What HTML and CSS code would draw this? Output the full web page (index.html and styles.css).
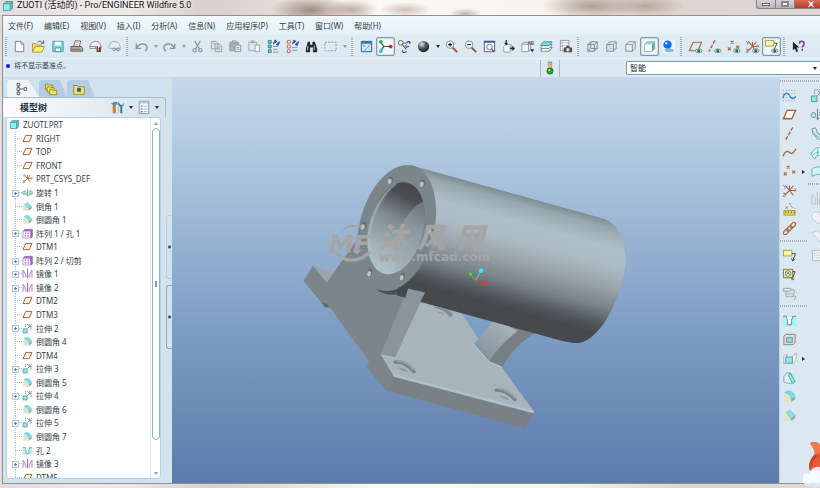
FILE: index.html
```
<!DOCTYPE html>
<html lang="zh-CN">
<head>
<meta charset="utf-8">
<title>ZUOTI (活动的) - Pro/ENGINEER Wildfire 5.0</title>
<link rel="stylesheet" href="styles.css">
</head>
<body>
<svg class="defs" aria-hidden="true">
  <defs>
    <radialGradient id="ball" cx=".35" cy=".3" r=".75"><stop offset="0" stop-color="#e8ecef"/><stop offset=".45" stop-color="#59636b"/><stop offset="1" stop-color="#15191c"/></radialGradient>
  </defs>
  <symbol id="part" viewBox="0 0 16 16"><path d="M2 5l3-3h9v9l-3 3H2z" fill="#5cc4c9"/><path d="M2 5h9v9H2z" fill="#84f4f4"/><path d="M2 5l3-3h9v9l-3 3H2zM2 5h9v9M11 5l3-3" fill="none" stroke="#5b868b"/></symbol>
  <symbol id="new" viewBox="0 0 16 16"><path d="M3.500 2.500h6l3 3v8h-9z" fill="#fff" stroke="#808080"/><path d="M9.500 2.500v3h3" fill="none" stroke="#808080"/></symbol>
  <symbol id="open" viewBox="0 0 16 16"><path d="M1.500 14V5h4l1 1.500h5V9" fill="#f6e278" stroke="#a8954c"/><path d="M1.500 14l3-6h10l-3 6z" fill="#fbee72" stroke="#a8954c"/><path d="M7 3.500c2-2 4-1.500 5 .5M13.500 1.500v3h-3" fill="none" stroke="#444"/></symbol>
  <symbol id="save" viewBox="0 0 16 16"><path d="M3 2.500h11v11H3z" fill="#5fe0e3" stroke="#5f939c"/><path d="M5 3h7v4H5z" fill="#fff"/><path d="M5.500 9.500h6v4h-6z" fill="#e6f7f8" stroke="#5f939c"/></symbol>
  <symbol id="print" viewBox="0 0 16 16"><path d="M5 8l1.500-6h6L11 8z" fill="#fff" stroke="#666"/><path d="M2 8h11l1.500 2v3H2z" fill="#b5b0aa" stroke="#5d5757"/><path d="M3 11h9" stroke="#7c5a52"/><path d="M7 4h3M6.500 6h3" stroke="#999"/><path d="M10 11h2" stroke="#2dc33d"/></symbol>
  <symbol id="mail" viewBox="0 0 16 16"><path d="M2 9c0-8 11-9 12-1v2H2z" fill="#f7f4ef" stroke="#888"/><path d="M2 8h6v2" fill="none" stroke="#888"/><path d="M10 7.500v5.500h2.500V9" fill="none" stroke="#7b362a" stroke-width="1.500"/><path d="M13 8v6" stroke="#333"/></symbol>
  <symbol id="maillink" viewBox="0 0 16 16"><path d="M2 9c0-8 11-9 12-1v2H2z" fill="#e6ebee" stroke="#a5adb2"/><path d="M6 11c0-2 3-2 3 0s-3 2-3 0M10 11c0-2 4-2 4 0s-4 2-4 0M8 11h4" fill="none" stroke="#8a9399"/></symbol>
  <symbol id="undo" viewBox="0 0 16 16"><path d="M2.500 5v5h5M3 10c2-6 10-6 11-1 0 2-1 3-2 4" fill="none" stroke="#8b969c" stroke-width="1.500"/></symbol>
  <symbol id="redo" viewBox="0 0 16 16"><path d="M13.500 5v5h-5M13 10C11 4 3 4 2 9c0 2 1 3 2 4" fill="none" stroke="#8b969c" stroke-width="1.500"/></symbol>
  <symbol id="cut" viewBox="0 0 16 16"><path d="M5 2l5 8.500M11 2L6 10.500" stroke="#8f9aa1" stroke-width="1.300"/><g fill="none" stroke="#8f9aa1" stroke-width="1.300"><circle cx="5" cy="12" r="1.800"/><circle cx="11" cy="12" r="1.800"/></g></symbol>
  <symbol id="copy" viewBox="0 0 16 16"><path d="M2.500 2.500h5l2 2v6h-7zM6.500 5.500h5l2 2v6h-7z" fill="#dfe5e8" stroke="#98a2a8"/><path d="M4 5h3M8 8.500h4M8 10.500h4" stroke="#98a2a8"/></symbol>
  <symbol id="paste" viewBox="0 0 16 16"><path d="M2 3.500h9v9H2z" fill="#a9b2b7" stroke="#8a959b"/><path d="M4.500 2h4v2h-4z" fill="#dce2e5" stroke="#8a959b"/><path d="M7.500 6.500h6v7h-6z" fill="#e8edef" stroke="#8a959b"/><path d="M9 9h3M9 11h3" stroke="#8a959b"/></symbol>
  <symbol id="pastes" viewBox="0 0 16 16"><path d="M2 3.500h8v9H2z" fill="#e3e8ea" stroke="#9aa4aa"/><path d="M4.500 2h3v2h-3z" fill="#b7c0c5" stroke="#9aa4aa"/><path d="M8.500 6.500h5v7h-5z" fill="#f2f5f6" stroke="#9aa4aa"/></symbol>
  <symbol id="regen" viewBox="0 0 16 16"><path d="M2.500 1.500h3v3h-3zM2.500 6.500h3v3h-3zM2.500 11.500h3v3h-3z" fill="#4be0e2" stroke="#47777e"/><path d="M7.500 8h5M7.500 11h5M7.500 14h6" stroke="#8b989e"/><path d="M8 5.500c0-2 1-3 3-3M14 2.500c1 2 0 3-2 3M9.500 1l2 1.500-2 1.500zM13 4l-2 1.500L13 7z" fill="#274cad" stroke="#274cad"/></symbol>
  <symbol id="regenmgr" viewBox="0 0 16 16"><path d="M2.500 1.500h3v3h-3zM2.500 6.500h3v3h-3zM2.500 11.500h3v3h-3z" fill="#fff" stroke="#cb5f54"/><path d="M7.500 9h6M7.500 12h6" stroke="#8b989e"/><path d="M8 5.500c0-2 1-3 3-3M14 2.500c1 2 0 3-2 3M9.500 1l2 1.500-2 1.500zM13 4l-2 1.500L13 7z" fill="#274cad" stroke="#274cad"/></symbol>
  <symbol id="find" viewBox="0 0 16 16"><path d="M4 3h2.500v3H9V3h2.500l2.500 7v4H9.500V9h-3v5H2v-4z" fill="#25282a"/><path d="M4 7v5M11 7v5" stroke="#bdc6ca"/></symbol>
  <symbol id="select" viewBox="0 0 16 16"><path d="M2 3.500h12v9H2z" fill="none" stroke="#87939a" stroke-dasharray="2 1.500"/></symbol>
  <symbol id="repaint" viewBox="0 0 16 16"><path d="M2.500 2.500h11v11h-11z" fill="#c7e6fa" stroke="#2d579b"/><path d="M3 3h10v2H3z" fill="#3f6fb7"/><path d="M12 5.500L5 13V9z" fill="#fff"/><path d="M4 6.500l3 2M12 5.500L8 10l-3 3" fill="none" stroke="#5384bf"/></symbol>
  <symbol id="spin" viewBox="0 0 16 16"><path d="M3 3l3 5-3 5M6 8h8" fill="none" stroke="#414e53" stroke-width="1.300"/><circle cx="3" cy="3" r="2" fill="#28bc32"/><circle cx="3" cy="13" r="2" fill="#29c9cc"/><circle cx="13.500" cy="8" r="2" fill="#e11d24"/></symbol>
  <symbol id="orient" viewBox="0 0 16 16"><circle cx="4" cy="4" r="2.500" fill="#f4f8fa" stroke="#666"/><circle cx="8" cy="6" r="2" fill="none" stroke="#666"/><path d="M6 7l4 4" stroke="#96532d"/><path d="M10 4c3-2 4-1 4 1M13 8c-3 0-4 1-4 3M6 12c-1 3 3 3 4 1" fill="none" stroke="#3b4ca0" stroke-width="1.300"/><path d="M11 2h3v3z" fill="#3b4ca0"/></symbol>
  <symbol id="sphere" viewBox="0 0 16 16"><circle cx="8" cy="8" r="6" fill="url(#ball)"/></symbol>
  <symbol id="zin" viewBox="0 0 16 16"><path d="M9 9l5 5" stroke="#96532d" stroke-width="2"/><circle cx="6.500" cy="6" r="4" fill="#f5f9fb" stroke="#888"/><path d="M4.500 6h4M6.500 4v4" stroke="#111" stroke-width="1.200"/></symbol>
  <symbol id="zout" viewBox="0 0 16 16"><path d="M9 9l5 5" stroke="#96532d" stroke-width="2"/><circle cx="6.500" cy="6" r="4" fill="#f5f9fb" stroke="#888"/><path d="M4.500 6h4" stroke="#111" stroke-width="1.200"/></symbol>
  <symbol id="refit" viewBox="0 0 16 16"><path d="M2.500 2.500h11v11h-11z" fill="#fff" stroke="#3c5b94"/><path d="M2 3h12" stroke="#3c5b94" stroke-width="2"/><circle cx="8" cy="8.500" r="3" fill="#f5f9fb" stroke="#777"/><path d="M10 10.500l3 3" stroke="#96532d" stroke-width="1.600"/></symbol>
  <symbol id="datumo" viewBox="0 0 16 16"><path d="M3 8l2-2h6v6l-2 2H3z" fill="#fff" stroke="#8b989c"/><path d="M9 8l2-2v6l-2 2z" fill="#72d4d8"/><path d="M5.500 1v4M4 4l1.500 2L7 4M10 10h4M12 8l2 2-2 2" fill="none" stroke="#222" stroke-width="1.200"/></symbol>
  <symbol id="views" viewBox="0 0 16 16"><path d="M2 5.500l2-2h7v8l-2 2H2zM2 5.500h7v8M9 5.500l2-2" fill="#eff7f9" stroke="#8b989c"/><path d="M11 11h4l-2 3z" fill="#222"/></symbol>
  <symbol id="layers" viewBox="0 0 16 16"><path d="M2 12l3-3h9l-3 4H2z" fill="#fff" stroke="#5f8387"/><path d="M2 9l3-3h9l-3 4H2z" fill="#fff" stroke="#5f8387"/><path d="M2 6l3-3h9l-3 4H2z" fill="#6be4e8" stroke="#5f8387"/></symbol>
  <symbol id="camera" viewBox="0 0 16 16"><path d="M2.500 1.500h9v11h-9z" fill="#fff" stroke="#8e9799"/><path d="M4.500 2v10M3 4h8M3 7h8" stroke="#b1b8ba"/><path d="M6 9h2l1-1.500h3L13 9h2v5H6z" fill="#57534a"/><circle cx="10.500" cy="11.500" r="1.800" fill="#e0dccf"/></symbol>
  <symbol id="wire" viewBox="0 0 16 16"><path d="M3 6l3-3h7v7l-3 3H3zM3 6h7v7M10 6l3-3M6 3v7h7M6 10l-3 3" fill="none" stroke="#7b858a"/></symbol>
  <symbol id="hidden" viewBox="0 0 16 16"><path d="M6 3v7h7M6 10l-3 3" fill="none" stroke="#b9c4ca"/><path d="M3 6l3-3h7v7l-3 3H3zM3 6h7v7M10 6l3-3" fill="none" stroke="#858f94"/></symbol>
  <symbol id="nohidden" viewBox="0 0 16 16"><path d="M3 6l3-3h7v7l-3 3H3zM3 6h7v7M10 6l3-3" fill="#e7f0f4" stroke="#7f898e"/></symbol>
  <symbol id="shaded" viewBox="0 0 16 16"><path d="M2.500 6l3-3h8l-3 3z" fill="#78e8ea"/><path d="M2.500 6h8v7.500h-8z" fill="#fff"/><path d="M10.500 6l3-3v7.500l-3 3z" fill="#6ba6aa"/><path d="M2.500 6l3-3h8v7.500l-3 3h-8z" fill="none" stroke="#8fa5a8"/></symbol>
  <symbol id="realism" viewBox="0 0 16 16"><path d="M1 1h14v14H1z" fill="#edf5fb"/><ellipse cx="9" cy="12" rx="5" ry="2" fill="#88b6db"/><circle cx="7" cy="6" r="4.500" fill="#116bed"/><circle cx="5.500" cy="4.500" r="1.300" fill="#b7e2ff"/></symbol>
  <symbol id="eye" viewBox="0 0 16 16"><ellipse cx="11.500" cy="12.500" rx="3.500" ry="2" fill="#dcebea" stroke="#7b8983"/><circle cx="11.500" cy="12.500" r="1.600" fill="#12706c"/></symbol>
  <symbol id="plane" viewBox="0 0 16 16"><path d="M1.500 12.500l4-9h9l-4 9z" fill="#fdf7ef" stroke="#a0603c" stroke-width="1.400"/></symbol>
  <symbol id="planeeye" viewBox="0 0 16 16"><path d="M1.500 12.500l4-9h9l-4 9z" fill="none" stroke="#a9663d" stroke-width="1.200"/><use href="#eye"/></symbol>
  <symbol id="axis" viewBox="0 0 16 16"><path d="M11.500 1.500L4 14.500" stroke="#a9663d" stroke-width="1.500" stroke-dasharray="4 1.500"/></symbol>
  <symbol id="axiseye" viewBox="0 0 16 16"><path d="M8.500 1.500L2 13.500" stroke="#a9663d" stroke-width="1.500" stroke-dasharray="4 1.500"/><use href="#eye"/></symbol>
  <symbol id="points" viewBox="0 0 16 16"><path d="M5 2l3 3M8 2L5 5M11 7l3 3M14 7l-3 3M2 9l3 3M5 9l-3 3" stroke="#a9663d" stroke-width="1.300"/></symbol>
  <symbol id="pointseye" viewBox="0 0 16 16"><use href="#points"/><use href="#eye"/></symbol>
  <symbol id="csys" viewBox="0 0 16 16"><path d="M8 8h5M8 8L4 3M8 8l-5 5M8 8l4-5M8 8l4 5M8 8V3" stroke="#a9663d" stroke-width="1.200"/><path d="M1 2l2 2 1-2M3 4v2M1 11h3l-3 3h3M13 6l2 3M15 6l-2 3" fill="none" stroke="#7f8689"/></symbol>
  <symbol id="csyseye" viewBox="0 0 16 16"><use href="#csys"/><use href="#eye"/></symbol>
  <symbol id="note" viewBox="0 0 16 16"><path d="M1.500 2.500h9v6h-9z" fill="#f9f7a8" stroke="#9b9750"/><path d="M10.500 6h4l-3 7M10 11l1.500 3 2-2" fill="none" stroke="#444"/></symbol>
  <symbol id="noteeye" viewBox="0 0 16 16"><path d="M1.500 1.500h9v6h-9z" fill="#f9f7a8" stroke="#9b9750"/><path d="M11 4.500h3l-3 6" fill="none" stroke="#444"/><use href="#eye"/></symbol>
  <symbol id="help" viewBox="0 0 16 16"><path d="M2 3v9l2-2 2 4 1.500-1L6 9h3z" fill="#222"/><path d="M9 5c0-4 5-3 5 0 0 2-2 2-2 4M12 10.500v2" fill="none" stroke="#8f2d91" stroke-width="1.700"/></symbol>
  <symbol id="sketch" viewBox="0 0 16 16"><path d="M1 2.500h14M1 6h14M1 10h14M1 13.500h14" stroke="#8c9ca6" stroke-dasharray="1 2"/><path d="M1 11c1-6 5-7 7-3s4 4 7 1" fill="none" stroke="#3c83db" stroke-width="1.600"/></symbol>
  <symbol id="curve" viewBox="0 0 16 16"><path d="M1 12c2-6 5-6 7-4s4 1 7-4" fill="none" stroke="#a9663d" stroke-width="1.400"/></symbol>
  <symbol id="ruler" viewBox="0 0 16 16"><path d="M2 9h12v5H2z" fill="#ead950" stroke="#a59a43"/><path d="M4 10v2M7 10v2M10 10v2M13 10v2" stroke="#706927"/><path d="M4 5l2 2M6 5L4 7M8 1l1 2M10 4l1 2M13 6l1 1" stroke="#a9663d"/></symbol>
  <symbol id="chain" viewBox="0 0 16 16"><g fill="none" stroke="#a9663d" stroke-width="1.300"><ellipse cx="4.500" cy="11.500" rx="3.500" ry="2" transform="rotate(-45 4.500 11.500)"/><ellipse cx="8" cy="8" rx="3.500" ry="2" transform="rotate(-45 8 8)"/><ellipse cx="11.500" cy="4.500" rx="3.500" ry="2" transform="rotate(-45 11.500 4.500)"/></g></symbol>
  <symbol id="annot" viewBox="0 0 16 16"><path d="M1.500 2.500h10v9h-10z" fill="#f8f27c" stroke="#7b763c"/><circle cx="6.500" cy="7" r="3" fill="#fff" stroke="#666"/><path d="M5 8l1.500-2.500L8 8M11 5h3l-3 7M10 11l1 3 2-2" fill="none" stroke="#444"/></symbol>
  <symbol id="prop" viewBox="0 0 16 16"><path d="M1.500 2.500h8v3h-8zM4.500 8.500h8v3h-8z" fill="#e1e8eb" stroke="#9ba5ab"/><path d="M4 6v3M10 4h3v4M13 11h2l-2 4" fill="none" stroke="#9ba5ab"/></symbol>
  <symbol id="hole" viewBox="0 0 16 16"><path d="M1 4h14v10H1z" fill="#9deff2"/><path d="M5 4h6v2l-1 1v5H6V7L5 6z" fill="#fff"/><path d="M1 3.500h4V6l1 1v5.500h4V7l1-1V3.500h4" fill="none" stroke="#6d8794"/><path d="M1 12l4-4M1 8l3-3M11 14l4-4M12 9l3-3" stroke="#e8feff"/></symbol>
  <symbol id="shell" viewBox="0 0 16 16"><path d="M2 4.500l2-2h10v9l-2 2H2z" fill="#dddcd6" stroke="#7d8486"/><path d="M5 6h6v5H5z" fill="#7be8eb" stroke="#7d8486"/></symbol>
  <symbol id="rib" viewBox="0 0 16 16"><path d="M2 6l3-3v8l-3 3z" fill="#fff" stroke="#a0a7aa"/><path d="M11 6l4-4v8l-4 4z" fill="#fff" stroke="#a0a7aa"/><path d="M4 6.500h7V13H4z" fill="#86ecee" stroke="#6f9599"/></symbol>
  <symbol id="draft" viewBox="0 0 16 16"><path d="M2 13V7l3-4h4l5 9-3 3z" fill="#e6ecec" stroke="#6fb5b8"/><path d="M8 3l6 9-3 2-4-8z" fill="#8ceeee" stroke="#3db0b5"/></symbol>
  <symbol id="round" viewBox="0 0 16 16"><path d="M2 5l4 1c3 1 4 3 4 8H2z" fill="#e2e0d0"/><path d="M3 4c2-3 9-3 11 4l-4 3C10 7 7 5 3 4z" fill="#6ae6e9" stroke="#8aacad" stroke-width=".700"/><path d="M14 8v3l-4 3v-3z" fill="#9da6a3"/></symbol>
  <symbol id="chamfer" viewBox="0 0 16 16"><path d="M2 5l3-2 5 7v4H2z" fill="#e2e0d0"/><path d="M5 5l3-3 6 6-4 4z" fill="#72eaec" stroke="#8aacad" stroke-width=".700"/><path d="M14 8v3l-4 3v-3z" fill="#9da6a3"/></symbol>
  <symbol id="extrude" viewBox="0 0 16 16"><path d="M1.500 8.500h6v6h-6z" fill="#86ecee" stroke="#5c8d91"/><path d="M5 6V2h9v7h-4" fill="none" stroke="#78858a" stroke-dasharray="2 1"/><path d="M8 8l4-4M12 4H9M12 4v3" fill="none" stroke="#555f63"/></symbol>
  <symbol id="revolve" viewBox="0 0 16 16"><path d="M1 9c1-4 4-4 5-1s-4 5-5 1M10 6c3-2 5 0 5 3s-4 2-5-1" fill="#aee8ea" stroke="#6d7c81"/><path d="M8 2v12M6 11c3 2 5 1 6-1" fill="none" stroke="#6d7c81"/></symbol>
  <symbol id="pattern" viewBox="0 0 16 16"><path d="M2 4l2-2h11v11l-2 2" fill="#9268b9" stroke="#8258a6"/><path d="M1.500 4.500h11v10h-11z" fill="#fff" stroke="#a569d4"/><path d="M4 7.500h2M8 7.500h2M4 11.500h2M8 11.500h2" stroke="#8d53b8" stroke-width="2"/></symbol>
  <symbol id="mirror" viewBox="0 0 16 16"><path d="M1.500 14V3l4 7v4M14.500 14V3l-4 7v4" fill="#f5edff" stroke="#b172e4" stroke-width="1.300"/><path d="M8 1v14" stroke="#75667f" stroke-width="1.200"/></symbol>
  <symbol id="sweep" viewBox="0 0 16 16"><path d="M2 3l4-1 2 6 6 3v3H8L3 8z" fill="#dfe9e9" stroke="#7d8d90"/><path d="M2 3l4 6 6 4-7-2z" fill="#54d4d8"/></symbol>
  <symbol id="surf" viewBox="0 0 16 16"><path d="M1 10c4-8 8-8 14-6v9c-5-3-8-3-10 2z" fill="#d3f7f6" stroke="#6fa0a3"/><path d="M3 11c4-4 7-4 12-2M8 5v7M12 4v7" fill="none" stroke="#50bcbf"/></symbol>
  <symbol id="style" viewBox="0 0 16 16"><path d="M2 13V6c1-3 7-3 12-3v8c-5 0-9 0-12 2z" fill="#c9f5f6" stroke="#76a6aa"/></symbol>
  <symbol id="gmirror" viewBox="0 0 16 16"><path d="M2 14V4l4 4v6zM14 14V4l-4 4v6zM8 1v14" fill="#dce3e6" stroke="#b9c4ca"/></symbol>
  <symbol id="merge" viewBox="0 0 16 16"><path d="M2 5l3-3h4l2 2v2h3v5l-3 3H7l-2-3-3-2z" fill="#eef2f4" stroke="#bfc9ce"/></symbol>
  <symbol id="trim" viewBox="0 0 16 16"><path d="M2 4l5-2 7 3v5l-4 4-2-4z" fill="#eef2f4" stroke="#bfc9ce"/></symbol>
  <symbol id="gpattern" viewBox="0 0 16 16"><path d="M2.500 2.500h12v11h-12z" fill="#edf1f3" stroke="#b0bac0"/><path d="M4 5.500h10M4 8h10M4 10.500h10" stroke="#b0bac0" stroke-dasharray="1 2"/></symbol>
  <symbol id="treeic" viewBox="0 0 16 16"><path d="M3.500 1.500h3v3h-3zM3.500 6.500h3v3h-3zM3.500 11.500h3v3h-3zM11.500 6.500h3v3h-3z" fill="#fff" stroke="#4b5154"/><path d="M5 4.500v2M5 9.500v2M7 8h4" stroke="#4b5154"/></symbol>
  <symbol id="folders" viewBox="0 0 16 16"><g fill="#f8e660" stroke="#8f803a"><path d="M1.500 2.500h3l1 1h4v5h-8z"/><path d="M3.500 5.500h3l1 1h4v5h-8z"/><path d="M6.500 8.500h3l1 1h4v5h-8z"/></g></symbol>
  <symbol id="fav" viewBox="0 0 16 16"><path d="M2 4h4l1 1.500h7V14H2z" fill="#f9ea5c" stroke="#8f803a"/><path d="M8 6.500v5M5.500 9h5M6 7l4 4M10 7l-4 4" stroke="#2747be" stroke-width="1.200"/></symbol>
  <symbol id="tools" viewBox="0 0 16 16"><path d="M1 4l3-2h4v3H6v9H3V5z" fill="#78868d"/><path d="M3 7h3v7H3z" fill="#d98046"/><path d="M9 2c-1 3 0 4 2 5v7h2V7c2-1 2-3 1-5v3h-3z" fill="#3875a8"/><path d="M9 7v7" stroke="#e3b331"/></symbol>
  <symbol id="list" viewBox="0 0 16 16"><path d="M3.500 1.500h10v13h-10z" fill="#fff" stroke="#8a979e"/><path d="M4 2h9v2H4z" fill="#c4d0d6"/><path d="M5 6.500h2M5 9.500h2M5 12.500h2" stroke="#4f7995" stroke-width="1.500"/><path d="M8 6.500h4M8 9.500h4M8 12.500h4" stroke="#9ba7ad"/></symbol>
  <symbol id="light" viewBox="0 0 16 16"><path d="M6 1h4v10H6z" fill="#e1a198" stroke="#9b8277" stroke-width=".700"/><path d="M6.500 5h3v3h-3z" fill="#e4d248"/><circle cx="8" cy="11.500" r="3.500" fill="#1fac2c" stroke="#19671f"/><circle cx="7" cy="10.500" r="1" fill="#c3ffc1"/></symbol>
</svg>

<header class="title">
  <svg class="title-icon"><use href="#part"/></svg>
  <h1>ZUOTI (活动的) - Pro/ENGINEER Wildfire 5.0</h1>
  <div class="controls">
    <button aria-label="最小化"><i class="g-min"></i></button><button aria-label="最大化"><i class="g-max"></i></button><button class="close" aria-label="关闭"><svg viewBox="0 0 10 8"><path d="M1 0h2l2 2 2-2h2L6.500 3.500 9 7H7L5 5 3 7H1l2.500-3.500z" fill="#fff" stroke="#8d4a40" stroke-width=".500"/></svg></button>
  </div>
</header>

<div class="window">
  <nav class="menu">
    <a href="#">文件(F)</a><a href="#">编辑(E)</a><a href="#">视图(V)</a><a href="#">插入(I)</a><a href="#">分析(A)</a><a href="#">信息(N)</a><a href="#">应用程序(P)</a><a href="#">工具(T)</a><a href="#">窗口(W)</a><a href="#">帮助(H)</a>
  </nav>

  <div class="bar" role="toolbar" aria-label="主工具栏">
    <i class="grip first"></i>
    <button aria-label="新建"><svg><use href="#new"/></svg></button>
    <button aria-label="打开"><svg><use href="#open"/></svg></button>
    <button aria-label="保存"><svg><use href="#save"/></svg></button>
    <button aria-label="打印"><svg><use href="#print"/></svg></button>
    <button aria-label="发送邮件"><svg><use href="#mail"/></svg></button>
    <button aria-label="发送链接"><svg><use href="#maillink"/></svg></button>
    <i class="grip"></i>
    <button aria-label="撤消"><svg><use href="#undo"/></svg></button>
    <button class="drop dim" aria-label="撤消列表"></button>
    <button aria-label="重做"><svg><use href="#redo"/></svg></button>
    <button class="drop dim" aria-label="重做列表"></button>
    <button aria-label="剪切"><svg><use href="#cut"/></svg></button>
    <button aria-label="复制"><svg><use href="#copy"/></svg></button>
    <button aria-label="粘贴"><svg><use href="#paste"/></svg></button>
    <button aria-label="选择性粘贴"><svg><use href="#pastes"/></svg></button>
    <button aria-label="再生"><svg><use href="#regen"/></svg></button>
    <button aria-label="再生管理器"><svg><use href="#regenmgr"/></svg></button>
    <button aria-label="查找"><svg><use href="#find"/></svg></button>
    <button aria-label="框选"><svg><use href="#select"/></svg></button>
    <button class="drop dim" aria-label="选择方式"></button>
    <i class="grip"></i>
    <button aria-label="重画"><svg><use href="#repaint"/></svg></button>
    <button class="on" aria-label="旋转中心"><svg><use href="#spin"/></svg></button>
    <button aria-label="定向模式"><svg><use href="#orient"/></svg></button>
    <button aria-label="外观库"><svg><use href="#sphere"/></svg></button>
    <button class="drop" aria-label="外观列表"></button>
    <button aria-label="放大"><svg><use href="#zin"/></svg></button>
    <button aria-label="缩小"><svg><use href="#zout"/></svg></button>
    <button aria-label="重新调整"><svg><use href="#refit"/></svg></button>
    <button aria-label="重定向"><svg><use href="#datumo"/></svg></button>
    <button aria-label="已保存视图"><svg viewBox="0 0 16 16"><use href="#views"/><text x="8" y="6" class="glyph">AB</text></svg></button>
    <button aria-label="层"><svg><use href="#layers"/></svg></button>
    <button aria-label="视图管理器"><svg><use href="#camera"/></svg></button>
    <i class="grip"></i>
    <button aria-label="线框"><svg><use href="#wire"/></svg></button>
    <button aria-label="隐藏线"><svg><use href="#hidden"/></svg></button>
    <button aria-label="无隐藏线"><svg><use href="#nohidden"/></svg></button>
    <button class="on" aria-label="着色"><svg><use href="#shaded"/></svg></button>
    <button aria-label="增强的真实感"><svg><use href="#realism"/></svg></button>
    <i class="grip"></i>
    <button aria-label="平面显示"><svg><use href="#planeeye"/></svg></button>
    <button aria-label="轴显示"><svg><use href="#axiseye"/></svg></button>
    <button aria-label="点显示"><svg><use href="#pointseye"/></svg></button>
    <button aria-label="坐标系显示"><svg><use href="#csyseye"/></svg></button>
    <button class="on" aria-label="注释显示"><svg><use href="#noteeye"/></svg></button>
    <i class="grip"></i>
    <button aria-label="帮助"><svg><use href="#help"/></svg></button>
  </div>

  <div class="message">
    <p>将不显示基准点。</p>
    <div class="status"><svg><use href="#light"/></svg></div>
    <div class="filter"><select aria-label="选择过滤器"><option>智能</option></select></div>
  </div>

  <main>
    <aside class="panel">
      <div class="tabs">
        <button class="tab active" aria-label="模型树"><svg><use href="#treeic"/></svg></button>
        <button class="tab" aria-label="文件夹浏览器"><svg><use href="#folders"/></svg></button>
        <button class="tab" aria-label="收藏夹"><svg><use href="#fav"/></svg></button>
      </div>
      <div class="panel-head">
        <h2>模型树</h2>
        <button aria-label="设置"><svg><use href="#tools"/></svg></button><button class="drop" aria-label="设置列表"></button>
        <button aria-label="显示"><svg><use href="#list"/></svg></button><button class="drop" aria-label="显示列表"></button>
      </div>
      <div class="tree-box">
        <div class="tree-view">
        <ul class="tree">
          <li class="root"><svg><use href="#part"/></svg>ZUOTI.PRT</li>
          <li><svg><use href="#plane"/></svg>RIGHT</li>
          <li><svg><use href="#plane"/></svg>TOP</li>
          <li><svg><use href="#plane"/></svg>FRONT</li>
          <li><svg><use href="#csys"/></svg>PRT_CSYS_DEF</li>
          <li><button aria-label="展开"></button><svg><use href="#revolve"/></svg>旋转 1</li>
          <li><svg><use href="#chamfer"/></svg>倒角 1</li>
          <li><svg><use href="#round"/></svg>倒圆角 1</li>
          <li><button aria-label="展开"></button><svg><use href="#pattern"/></svg>阵列 1 / 孔 1</li>
          <li><svg><use href="#plane"/></svg>DTM1</li>
          <li><button aria-label="展开"></button><svg><use href="#pattern"/></svg>阵列 2 / 切剪</li>
          <li><button aria-label="展开"></button><svg><use href="#mirror"/></svg>镜像 1</li>
          <li><button aria-label="展开"></button><svg><use href="#mirror"/></svg>镜像 2</li>
          <li><svg><use href="#plane"/></svg>DTM2</li>
          <li><svg><use href="#plane"/></svg>DTM3</li>
          <li><button aria-label="展开"></button><svg><use href="#extrude"/></svg>拉伸 2</li>
          <li><svg><use href="#round"/></svg>倒圆角 4</li>
          <li><svg><use href="#plane"/></svg>DTM4</li>
          <li><button aria-label="展开"></button><svg><use href="#extrude"/></svg>拉伸 3</li>
          <li><svg><use href="#round"/></svg>倒圆角 5</li>
          <li><button aria-label="展开"></button><svg><use href="#extrude"/></svg>拉伸 4</li>
          <li><svg><use href="#round"/></svg>倒圆角 6</li>
          <li><button aria-label="展开"></button><svg><use href="#extrude"/></svg>拉伸 5</li>
          <li><svg><use href="#round"/></svg>倒圆角 7</li>
          <li><svg><use href="#hole"/></svg>孔 2</li>
          <li><button aria-label="展开"></button><svg><use href="#mirror"/></svg>镜像 3</li>
          <li><svg><use href="#plane"/></svg>DTM5</li>
        </ul>
        </div>
        <div class="scroll"><i class="up"></i><span></span><i class="down"></i></div>
      </div>
    </aside>
    <div class="sash"><i></i><i></i></div>

    <section class="canvas" aria-label="模型">
      <svg viewBox="172 78 607 406" preserveAspectRatio="xMidYMid slice">
        <defs>
          <linearGradient id="cyl" gradientUnits="userSpaceOnUse" x1="440" y1="174" x2="405.700" y2="298.400">
            <stop offset="0" stop-color="#7f8c93"/><stop offset=".06" stop-color="#98a6ae"/><stop offset=".2" stop-color="#afbec8"/><stop offset=".34" stop-color="#adbbc4"/><stop offset=".5" stop-color="#98a4aa"/><stop offset=".66" stop-color="#7a8489"/><stop offset=".8" stop-color="#50565a"/><stop offset=".87" stop-color="#44494c"/><stop offset="1" stop-color="#45494c"/>
          </linearGradient>
          <linearGradient id="bore" gradientUnits="userSpaceOnUse" x1="411" y1="185" x2="390" y2="274">
            <stop offset="0" stop-color="#45494c"/><stop offset=".15" stop-color="#4a4f52"/><stop offset=".42" stop-color="#808b91"/><stop offset=".75" stop-color="#a2b0b8"/><stop offset="1" stop-color="#b3c2cb"/>
          </linearGradient>
          <linearGradient id="ribg" gradientUnits="userSpaceOnUse" x1="505" y1="326" x2="482" y2="354"><stop offset="0" stop-color="#a5b1b8"/><stop offset="1" stop-color="#89959d"/></linearGradient>
          <clipPath id="boreclip"><ellipse cx="396" cy="228.700" rx="27.300" ry="47" transform="rotate(14.400 396 228.700)"/></clipPath>
          <g id="slot"><path d="M-11-6C-6-9 9-1 11 5 9.500 7.500 7 6 6 4 2 0-5-4-10-3-12-4-12-5-11-6z" fill="#78838a"/><path d="M-8-6C-3-7 6-2 9 3" fill="none" stroke="#95a1a8" stroke-width="2"/><path d="M-7 1C-3 0 2 3 3 5-1 5-4 3-7 1z" fill="#909ba2"/></g>
          <g id="bolt"><ellipse rx="2.500" ry="4" transform="rotate(14)" fill="#626c71"/><ellipse cx="-.400" cy="1" rx="2" ry="2.800" transform="rotate(14)" fill="#b6c5ce"/></g>
        </defs>

        <path d="M494 322L476 343l13 19 13 6c8-15 20-27 34-35z" fill="#777f85"/>
        <path d="M494 320l-18 23 13 19c8-13 18-22 29-31z" fill="url(#ribg)"/>
        <path d="M408 288l53 25 18 27-6 5 15 17 14 6 32 44-1 2-140-37-12-22z" fill="#a7b4bc"/>
        <path d="M393.500 376l140 37-8.500 16-139-38z" fill="#798186"/>
        <path d="M392.500 375.500l141 37" stroke="#b1c1cc" stroke-width="2.500"/>
        <path d="M381 355l12 20.500M395 358l-14-3M473 344.500l16 18 13 5.500" fill="none" stroke="#b3c2cc" stroke-width="1.500"/>
        <path d="M303.500 281.500L313 266l13.700 17L357 240l21 50 30-1-27 66 12.500 21-7.500 15-19-23 2-6-39-54c-3 1-6 0-7-3z" fill="#7b858a"/>
        <path d="M313 266l21 7-7.300 10z" fill="#98a4ab"/>
        <path d="M322 303l4 1 3 3-4 1z" fill="#5e676c"/>
        <path d="M408 288l17 5-30 65-14-3z" fill="#8b949b"/>
        <path d="M376 289c10 4 22 3 32-6l10 8-10-1c-10 8-26 6-32-1z" fill="#4b5053"/>

        <path d="M407 165.500c4-.500 8 1 12 2.500l184 51c16 5 23 23 22.500 43-1 30-23 77-46 81.500-6 .500-12-1-17-2L397 296z" fill="url(#cyl)"/>
        <path d="M408 289l17 4-6 12-14-5z" fill="#8b949b"/>
        <ellipse cx="396.700" cy="228.500" rx="37.300" ry="64.300" transform="rotate(14.400 396.700 228.500)" fill="#7b868b"/>
        <ellipse cx="396" cy="228.700" rx="27.300" ry="47" transform="rotate(14.400 396 228.700)" fill="url(#bore)"/>
        <g clip-path="url(#boreclip)">
          <path d="M425 201c-19 8-37 39-28 76h28z" fill="#9ba9b1" opacity=".45"/>
          <path d="M396 184c-13 9-25 31-27 53 0 18 6 33 20 38" fill="none" stroke="#b2c0c8" stroke-width="2.500" opacity=".5"/>
        </g>
        <use href="#bolt" x="390.300" y="181"/><use href="#bolt" x="422.300" y="184"/><use href="#bolt" x="363.300" y="226.700"/><use href="#bolt" x="369.700" y="273.300"/><use href="#bolt" x="402.300" y="277.300"/><use href="#bolt" x="430" y="231"/>

        <use href="#slot" x="405" y="367.500"/><use href="#slot" x="506" y="395.500"/>
        <path d="M434 307c8 0 17 4 19 8 0 3-3 3-5 1-3-5-8-6-14-8z" fill="#828d94"/><path d="M437 312c3 0 6 1 8 3-3 0-6-1-8-3z" fill="#909ba2"/>

        <g fill="#a5a5a6">
          <text x="329" y="253" class="wm-logo">M</text><text x="353" y="253" class="wm-logo">F</text>
          <text x="379" y="248" class="wm-cjk">沐</text><text x="417" y="248" class="wm-cjk">风</text><text x="456" y="248" class="wm-cjk">网</text>
          <text x="379" y="261" class="wm-url">www.mfcad.com</text>
          <path d="M339 234c6-9 16-11 25-6-9-2-17 0-25 6zM334 252c6 13 29 14 38 0l-6 1c-7 8-23 8-28-1z"/>
          <path d="M353 250h9l-5 5z"/>
        </g>

        <path d="M475.500 281l-5-6.500" stroke="#38dc45"/><circle cx="470.500" cy="274.500" r="1.700" fill="#38e238"/>
        <path d="M475.500 281l5.500-9.500" stroke="#34e6ec"/><circle cx="481" cy="271.300" r="2.200" fill="#26f2f7"/>
        <path d="M475.500 281l9 2.500" stroke="#f02e2e"/><circle cx="485" cy="283.500" r="1.900" fill="#f33"/>
      </svg>
    </section>

    <aside class="side" aria-label="特征工具栏">
      <div class="col">
        <i class="hgrip"></i>
        <button aria-label="草绘"><svg><use href="#sketch"/></svg></button>
        <button aria-label="基准平面"><svg><use href="#plane"/></svg></button>
        <button aria-label="基准轴"><svg><use href="#axis"/></svg></button>
        <button aria-label="基准曲线"><svg><use href="#curve"/></svg></button>
        <div class="pair"><button aria-label="基准点"><svg><use href="#points"/></svg></button><button class="fly" aria-label="更多基准点"></button></div>
        <button aria-label="坐标系"><svg><use href="#csys"/></svg></button>
        <button aria-label="分析"><svg><use href="#ruler"/></svg></button>
        <button aria-label="参照"><svg><use href="#chain"/></svg></button>
        <i class="hgrip"></i>
        <button aria-label="注释"><svg><use href="#note"/></svg></button>
        <button aria-label="注释特征"><svg><use href="#annot"/></svg></button>
        <button aria-label="传播注释"><svg><use href="#prop"/></svg></button>
        <i class="hgrip"></i>
        <button aria-label="孔"><svg><use href="#hole"/></svg></button>
        <button aria-label="壳"><svg><use href="#shell"/></svg></button>
        <div class="pair"><button aria-label="筋"><svg><use href="#rib"/></svg></button><button class="fly" aria-label="更多筋"></button></div>
        <button aria-label="拔模"><svg><use href="#draft"/></svg></button>
        <button aria-label="倒圆角"><svg><use href="#round"/></svg></button>
        <button aria-label="倒角"><svg><use href="#chamfer"/></svg></button>
      </div>
      <div class="col">
        <i class="hgrip"></i>
        <button aria-label="拉伸"><svg><use href="#extrude"/></svg></button>
        <button aria-label="旋转"><svg><use href="#revolve"/></svg></button>
        <button aria-label="扫描"><svg><use href="#sweep"/></svg></button>
        <button aria-label="边界混合"><svg><use href="#surf"/></svg></button>
        <button aria-label="造型"><svg><use href="#style"/></svg></button>
        <i class="hgrip"></i>
        <button aria-label="镜像"><svg><use href="#gmirror"/></svg></button>
        <button aria-label="合并"><svg><use href="#merge"/></svg></button>
        <button aria-label="修剪"><svg><use href="#trim"/></svg></button>
        <button aria-label="阵列"><svg><use href="#gpattern"/></svg></button>
      </div>
    </aside>
  </main>
</div>

<svg class="pinwheel" viewBox="0 0 18 48" aria-hidden="true">
  <path d="M8 3c5-2 8-1 10 2v22c-3-1-7 0-10 4-2-6 0-12 5-17-1-5-3-8-5-11z" fill="#e75a32"/>
  <path d="M8 3c5-2 8-1 10 2v8l-5 1c-1-5-3-8-5-11z" fill="#f27850"/>
  <path d="M8 31c-2-6 0-12 5-17l3 2c-5 4-7 9-8 15z" fill="#c9442b"/>
  <path d="M1 38c-1-4 3-6 6-4 1-5 8-6 11-2v14c-3 2-6 1-8-1-5 2-10-1-9-7z" fill="#f5faff"/>
  <path d="M3 41c3 4 6 3 8 1 3 2 5 2 7 0v4c-3 2-6 1-8-1-4 1-7 0-7-4z" fill="#d5e7f6"/>
</svg>
</body>
</html>
```
FILE: styles.css
```
* { box-sizing: border-box; }

body {
  margin: 0;
  height: 100vh;
  min-height: 400px;
  display: flex;
  flex-direction: column;
  overflow: hidden;
  position: relative;
  padding: 0 0 4px 2px;
  font: 8px/12px "Noto Sans", "Noto Sans CJK SC", sans-serif;
  color: #33424a;
  background:
    radial-gradient(ellipse 40px 14px at 310px 10px, #a08c82 0, transparent 100%),
    radial-gradient(ellipse 26px 10px at 352px 10px, #c0aca2 0, transparent 100%),
    radial-gradient(ellipse 26px 8px at 405px 10px, #d0c0b6 0, transparent 100%),
    radial-gradient(ellipse 16px 6px at 465px 14px, #c3b3aa 0, transparent 100%),
    radial-gradient(ellipse 50px 14px at 592px 6px, #ae9d94 0, transparent 100%),
    radial-gradient(ellipse 40px 12px at 645px 6px, #b6a79e 0, transparent 100%),
    linear-gradient(90deg, #e4dcdc 0, #efe9e8 120px, #d8cfce 210px, #e6ddd8 280px, #fbf9f4 380px, #f7f3ec 560px, #ded5d0 680px, #e0d6d4 100%);
}

button {
  margin: 0;
  padding: 0;
  border: 0;
  background: none;
  font: inherit;
  color: inherit;
  display: flex;
  align-items: center;
  justify-content: center;
}

.defs { position: absolute; width: 0; height: 0; }
.glyph { font: bold 5px "Liberation Sans", sans-serif; fill: #555; }

.title {
  height: 15px;
  flex: none;
  display: flex;
  align-items: center;
  padding-bottom: 4px;
}
.title h1 {
  flex: 1;
  margin: 0;
  font: 400 9px/11px Roboto, "Noto Sans CJK SC", sans-serif;
  color: #111;
  text-shadow: 0 0 4px #fff, 0 0 4px #fff;
}
.title-icon { width: 12px; height: 12px; margin-right: 3px; }
.controls { display: flex; align-self: flex-start; }
.controls button {
  width: 19px;
  height: 9px;
  border: 1px solid #847f82;
  border-top: 0;
  border-right: 0;
  background: linear-gradient(#d5d2d4, #b9b4b8);
}
.controls button:first-child { border-bottom-left-radius: 3px; }
.controls .close { width: 26px; background: linear-gradient(#d56f5c, #c03421); }
.controls svg { width: 10px; height: 7px; margin-left: 7px; }
.g-min { width: 8px; height: 3px; background: #fff; border: 1px solid #66666b; }
.g-max { width: 8px; height: 6px; background: #fff; border: 2px solid #85858a; }

.window {
  flex: 1;
  min-height: 0;
  display: flex;
  flex-direction: column;
  border: 1px solid #8b9194;
  border-right: 0;
  background: #dce9f2;
}

.menu {
  flex: none;
  display: flex;
  gap: 11px;
  height: 19px;
  padding: 0 5px;
  align-items: center;
  background: linear-gradient(#f4f9fc, #e4eff7);
}
.menu a { color: #333f47; text-decoration: none; white-space: nowrap; }

.bar {
  flex: none;
  display: flex;
  height: 23px;
  align-items: center;
  overflow: hidden;
  background: linear-gradient(#e0ecf4, #dae8f1);
}
.bar button { width: 19px; height: 19px; flex: none; }
.bar svg, .side svg { width: 15px; height: 15px; flex: none; }
.bar .on {
  border: 1px solid #7f98a8;
  border-radius: 2px;
  background: #f4f9fc;
  box-shadow: inset 0 0 2px #7f98a8;
}
.grip {
  width: 8px;
  height: 19px;
  flex: none;
  background: repeating-linear-gradient(#9db0bc 0 1px, transparent 1px 2px) 2px 0 / 2px 100% no-repeat;
}
.grip.first { width: 7px; }

.drop::after {
  content: "";
  border: 2px solid transparent;
  border-top: 3px solid #222b30;
  border-bottom: 0;
}
.bar .drop { width: 9px; }
.drop.dim::after { border-top-color: #8e9aa1; }

.message {
  flex: none;
  display: flex;
  height: 20px;
  align-items: center;
  padding-left: 3px;
  border-top: 1px solid #e9f3f9;
  border-bottom: 1px solid #c5dbec;
}
.message p {
  flex: 1;
  margin: 0;
  font-size: 7px;
  line-height: 12px;
  display: flex;
  align-items: center;
  gap: 4px;
  padding-bottom: 4px;
}
.message p::before { content: ""; width: 4px; height: 4px; border-radius: 50%; background: #0a12e4; }
.status {
  width: 20px;
  height: 17px;
  display: flex;
  align-items: center;
  justify-content: center;
  border-left: 1px solid #a8b9c4;
  border-right: 1px solid #a8b9c4;
}
.status svg { width: 14px; height: 14px; }
.filter { position: relative; width: 194px; height: 14px; margin-left: 66px; }
.filter::after {
  content: "";
  position: absolute;
  right: 3px;
  top: 6px;
  border: 2px solid transparent;
  border-top: 3px solid #222b30;
  border-bottom: 0;
}
.filter select {
  appearance: none;
  display: block;
  width: 100%;
  height: 14px;
  padding: 0 3px;
  border: 1px solid #7a9db6;
  border-right: 0;
  border-radius: 2px 0 0 2px;
  font: inherit;
  color: #222;
  background: #fff;
}

main {
  flex: 1;
  min-height: 0;
  display: grid;
  grid-template-columns: 163px 6px minmax(0, 1fr) 41px;
}

.panel {
  min-height: 0;
  display: flex;
  flex-direction: column;
  background: #d3e3ee;
}
.tabs {
  height: 19px;
  flex: none;
  display: flex;
  padding: 2px 4px 0;
  background: #d0e2f0;
}
.tab {
  width: 28px;
  height: 17px;
  background: #b3cee2;
  clip-path: polygon(0 2px, 2px 0, 21px 0, 100% 100%, 0 100%);
}
.tab.active { width: 32px; background: #eff6fa; }
.tab svg { width: 14px; height: 14px; margin-right: 4px; }
.panel-head {
  height: 20px;
  flex: none;
  display: flex;
  align-items: center;
  border-top: 1px solid #a7bfce;
  border-right: 1px solid #a7bfce;
  border-radius: 0 3px 0 0;
  padding: 0 3px 0 17px;
  background: linear-gradient(90deg, #fbfdfe, #d3e3ee 95%);
}
.panel-head h2 { flex: 1; margin: 0; font-size: 9px; line-height: 12px; font-weight: 700; color: #26323a; }
.panel-head svg { width: 15px; height: 15px; }
.panel-head .drop { width: 11px; }

.tree-box {
  flex: 1;
  min-height: 0;
  display: flex;
  margin: 0 5px 4px 3px;
  border: 1px solid #b9d0df;
  border-radius: 3px;
  background: #fff;
}
.tree-view { flex: 1; min-width: 0; overflow: hidden; }
.tree {
  list-style: none;
  margin: 0;
  padding: 0;
  height: calc(100% + 6px);
  display: grid;
  grid-auto-rows: 1fr;
}
.tree li {
  position: relative;
  display: flex;
  align-items: center;
  gap: 3px;
  min-height: 0;
  padding-left: 15px;
  line-height: 13px;
  white-space: nowrap;
  background:
    repeating-linear-gradient(#b8bec1 0 1px, transparent 1px 2px) 8px 0 / 1px 100% no-repeat,
    repeating-linear-gradient(90deg, #b8bec1 0 1px, transparent 1px 2px) 8px 50% / 8px 1px no-repeat;
}
.tree .root { padding-left: 2px; background: none; }
.tree svg { width: 11px; height: 11px; flex: none; }
.tree button {
  position: absolute;
  left: 5px;
  top: 4px;
  width: 7px;
  height: 7px;
  border: 1px solid #b4cbdc;
  background:
    linear-gradient(#5f89a5, #5f89a5) center / 3px 1px no-repeat,
    linear-gradient(#5f89a5, #5f89a5) center / 1px 3px no-repeat,
    #e9f3fa;
}

.scroll {
  width: 10px;
  display: flex;
  flex-direction: column;
  align-items: center;
  border-left: 1px solid #e0eaf0;
}
.scroll span {
  flex: 1;
  width: 8px;
  border: 1px solid #8eb1c6;
  border-radius: 4px;
  background: linear-gradient(#7d9db1, #7d9db1) center / 2px 6px no-repeat, #fff;
}
.scroll i { height: 10px; display: flex; align-items: center; }
.scroll .down { height: 38px; align-items: flex-end; padding-bottom: 3px; }
.scroll i::before { content: ""; border: 2px solid transparent; }
.scroll .up::before { border-bottom: 3px solid #7ba3be; border-top: 0; }
.scroll .down::before { border-top: 3px solid #7ba3be; border-bottom: 0; }

.sash {
  display: flex;
  flex-direction: column;
  padding-top: 137px;
  gap: 6px;
  background: #d3e3ee;
}
.sash i {
  height: 64px;
  border: 1px solid #b5cfdf;
  border-right: 0;
  border-radius: 3px 0 0 3px;
  background: radial-gradient(circle, #44535c 0 1px, transparent 2px);
}
.sash i + i { border-color: #8ea4b1; }

.canvas {
  position: relative;
  min-height: 0;
  background: linear-gradient(#c5d9ea 0, #b1c9e0 18%, #7e9dc4 62%, #5b7bab 100%);
}
.canvas > svg { position: absolute; inset: 0; width: 100%; height: 100%; }
.wm-logo { font: italic bold 25px "DejaVu Sans", sans-serif; }
.wm-cjk { font: italic 900 28px "Noto Sans CJK SC", sans-serif; }
.wm-url { font: bold 12px "DejaVu Sans", sans-serif; }

.side {
  display: grid;
  grid-template-columns: 28px 19px;
  overflow: hidden;
  border-left: 1px solid #c0d4e2;
  background: #dbe8f1;
}
.col button { width: 19px; height: 19px; }
.pair { display: flex; }
.col .fly { width: 9px; }
.fly::after {
  content: "";
  border: 2px solid transparent;
  border-left: 3px solid #222b30;
  border-right: 0;
}
.hgrip {
  display: block;
  height: 8px;
  background: repeating-linear-gradient(90deg, #9db0bc 0 1px, transparent 1px 2px) 0 2px / 100% 2px no-repeat;
}

.pinwheel { position: absolute; right: 0; bottom: 0; width: 18px; height: 48px; }
```
